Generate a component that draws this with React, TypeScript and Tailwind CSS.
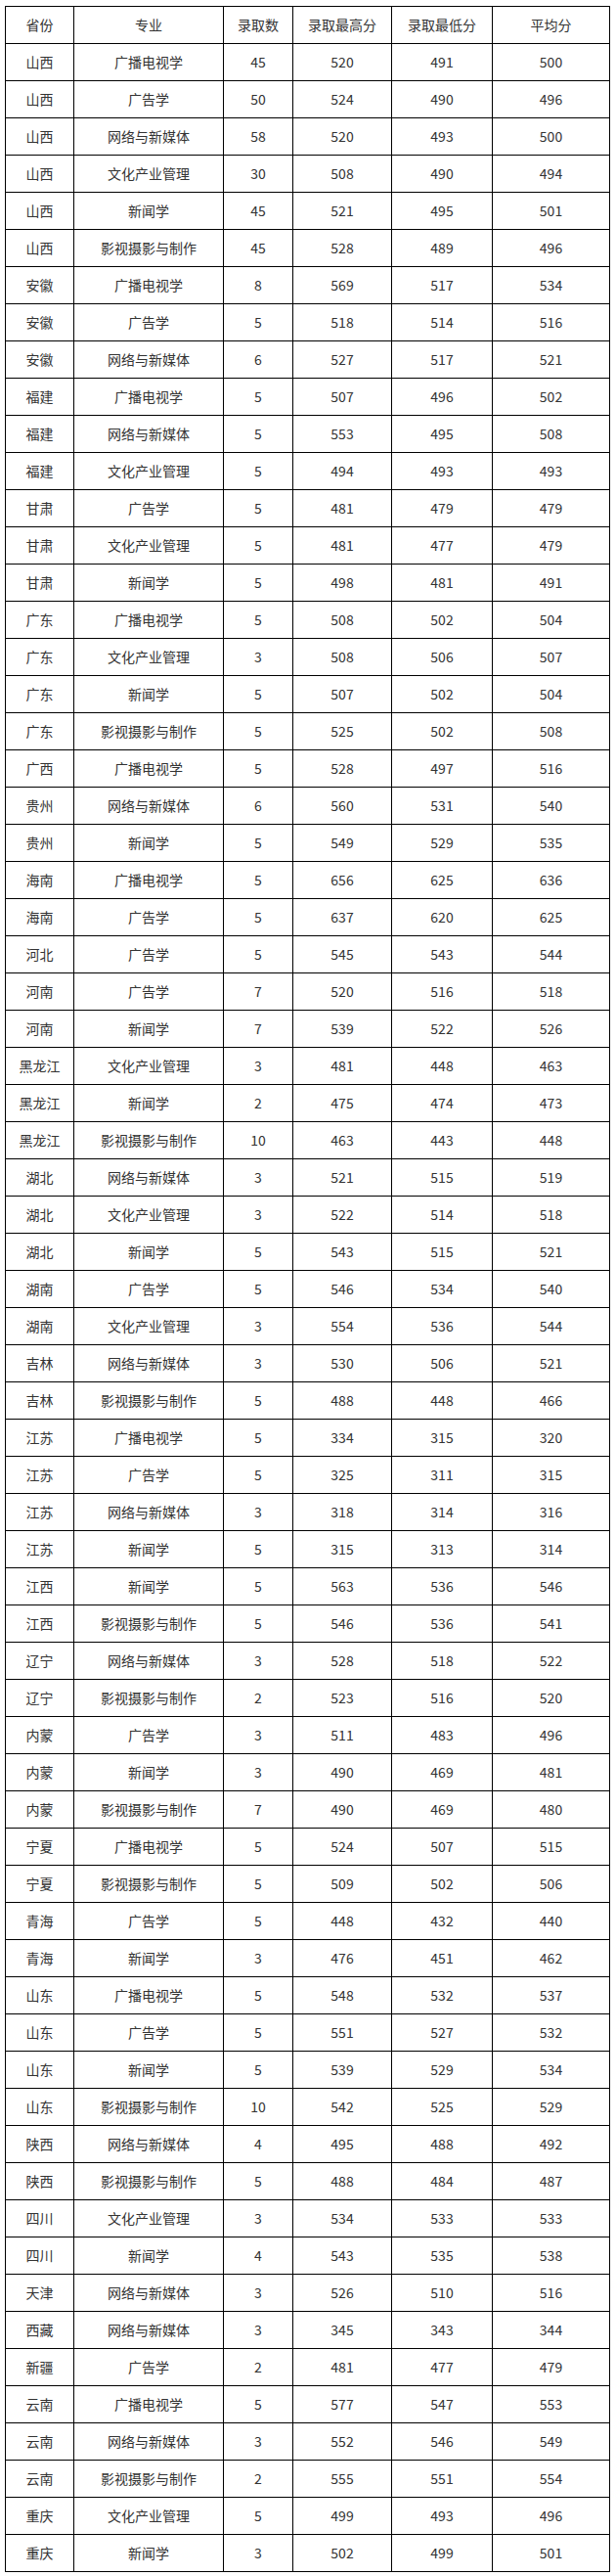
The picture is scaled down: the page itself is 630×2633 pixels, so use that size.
const headers = ["省份", "专业", "录取数", "录取最高分", "录取最低分", "平均分"];

// 省份, 专业, 录取数, 最高分, 最低分, 平均分
const rows: [string, string, number, number, number, number][] = [
  ["山西", "广播电视学", 45, 520, 491, 500],
  ["山西", "广告学", 50, 524, 490, 496],
  ["山西", "网络与新媒体", 58, 520, 493, 500],
  ["山西", "文化产业管理", 30, 508, 490, 494],
  ["山西", "新闻学", 45, 521, 495, 501],
  ["山西", "影视摄影与制作", 45, 528, 489, 496],
  ["安徽", "广播电视学", 8, 569, 517, 534],
  ["安徽", "广告学", 5, 518, 514, 516],
  ["安徽", "网络与新媒体", 6, 527, 517, 521],
  ["福建", "广播电视学", 5, 507, 496, 502],
  ["福建", "网络与新媒体", 5, 553, 495, 508],
  ["福建", "文化产业管理", 5, 494, 493, 493],
  ["甘肃", "广告学", 5, 481, 479, 479],
  ["甘肃", "文化产业管理", 5, 481, 477, 479],
  ["甘肃", "新闻学", 5, 498, 481, 491],
  ["广东", "广播电视学", 5, 508, 502, 504],
  ["广东", "文化产业管理", 3, 508, 506, 507],
  ["广东", "新闻学", 5, 507, 502, 504],
  ["广东", "影视摄影与制作", 5, 525, 502, 508],
  ["广西", "广播电视学", 5, 528, 497, 516],
  ["贵州", "网络与新媒体", 6, 560, 531, 540],
  ["贵州", "新闻学", 5, 549, 529, 535],
  ["海南", "广播电视学", 5, 656, 625, 636],
  ["海南", "广告学", 5, 637, 620, 625],
  ["河北", "广告学", 5, 545, 543, 544],
  ["河南", "广告学", 7, 520, 516, 518],
  ["河南", "新闻学", 7, 539, 522, 526],
  ["黑龙江", "文化产业管理", 3, 481, 448, 463],
  ["黑龙江", "新闻学", 2, 475, 474, 473],
  ["黑龙江", "影视摄影与制作", 10, 463, 443, 448],
  ["湖北", "网络与新媒体", 3, 521, 515, 519],
  ["湖北", "文化产业管理", 3, 522, 514, 518],
  ["湖北", "新闻学", 5, 543, 515, 521],
  ["湖南", "广告学", 5, 546, 534, 540],
  ["湖南", "文化产业管理", 3, 554, 536, 544],
  ["吉林", "网络与新媒体", 3, 530, 506, 521],
  ["吉林", "影视摄影与制作", 5, 488, 448, 466],
  ["江苏", "广播电视学", 5, 334, 315, 320],
  ["江苏", "广告学", 5, 325, 311, 315],
  ["江苏", "网络与新媒体", 3, 318, 314, 316],
  ["江苏", "新闻学", 5, 315, 313, 314],
  ["江西", "新闻学", 5, 563, 536, 546],
  ["江西", "影视摄影与制作", 5, 546, 536, 541],
  ["辽宁", "网络与新媒体", 3, 528, 518, 522],
  ["辽宁", "影视摄影与制作", 2, 523, 516, 520],
  ["内蒙", "广告学", 3, 511, 483, 496],
  ["内蒙", "新闻学", 3, 490, 469, 481],
  ["内蒙", "影视摄影与制作", 7, 490, 469, 480],
  ["宁夏", "广播电视学", 5, 524, 507, 515],
  ["宁夏", "影视摄影与制作", 5, 509, 502, 506],
  ["青海", "广告学", 5, 448, 432, 440],
  ["青海", "新闻学", 3, 476, 451, 462],
  ["山东", "广播电视学", 5, 548, 532, 537],
  ["山东", "广告学", 5, 551, 527, 532],
  ["山东", "新闻学", 5, 539, 529, 534],
  ["山东", "影视摄影与制作", 10, 542, 525, 529],
  ["陕西", "网络与新媒体", 4, 495, 488, 492],
  ["陕西", "影视摄影与制作", 5, 488, 484, 487],
  ["四川", "文化产业管理", 3, 534, 533, 533],
  ["四川", "新闻学", 4, 543, 535, 538],
  ["天津", "网络与新媒体", 3, 526, 510, 516],
  ["西藏", "网络与新媒体", 3, 345, 343, 344],
  ["新疆", "广告学", 2, 481, 477, 479],
  ["云南", "广播电视学", 5, 577, 547, 553],
  ["云南", "网络与新媒体", 3, 552, 546, 549],
  ["云南", "影视摄影与制作", 2, 555, 551, 554],
  ["重庆", "文化产业管理", 5, 499, 493, 496],
  ["重庆", "新闻学", 3, 502, 499, 501],
];

const cell = "border border-black h-[38px] p-0 text-center align-middle";

export default function App() {
  return (
    <div
      className="bg-white pt-[6px] pl-[5px] pb-[5px] text-[14px] text-[#333]"
      style={{ fontFamily: '"Noto Sans CJK SC", "Noto Sans", sans-serif' }}
    >
      <table className="table-fixed border-collapse w-[618px]">
        <colgroup>
          <col className="w-[70px]" />
          <col className="w-[153px]" />
          <col className="w-[71px]" />
          <col className="w-[101px]" />
          <col className="w-[103px]" />
          <col className="w-[120px]" />
        </colgroup>
        <thead>
          <tr>
            {headers.map((h) => (
              <th key={h} className={`${cell} font-normal`}>
                {h}
              </th>
            ))}
          </tr>
        </thead>
        <tbody>
          {rows.map((r, i) => (
            <tr key={i}>
              {r.map((v, j) => (
                <td key={j} className={cell}>
                  {v}
                </td>
              ))}
            </tr>
          ))}
        </tbody>
      </table>
    </div>
  );
}
